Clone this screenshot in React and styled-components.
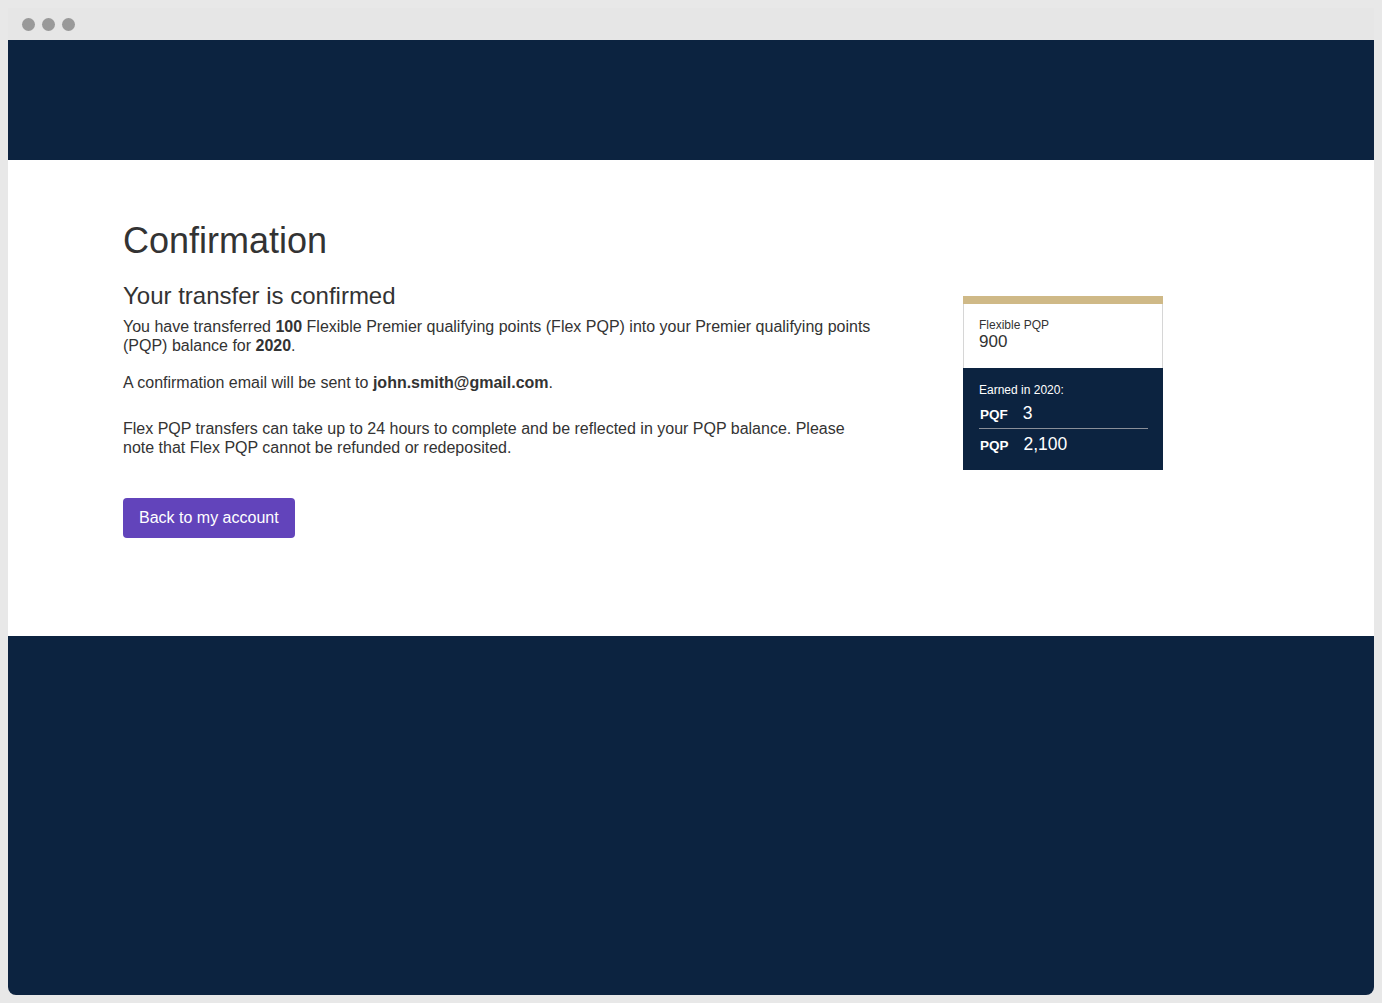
import styled, { createGlobalStyle } from "styled-components";

const GlobalStyle = createGlobalStyle`
  html, body {
    margin: 0;
    padding: 0;
    background: #e8e8e8;
  }
  body {
    font-family: "Liberation Sans", Arial, Helvetica, sans-serif;
    color: #333;
  }
`;

const Window = styled.div`
  margin: 8px;
  height: 987px;
  border-radius: 0 0 8px 8px;
  overflow: hidden;
  display: flex;
  flex-direction: column;
  background: #e6e6e6;
`;

const Chrome = styled.div`
  height: 32px;
  display: flex;
  align-items: center;
  gap: 7px;
  padding-left: 14px;
  box-sizing: border-box;
`;

const Dot = styled.span`
  width: 13px;
  height: 13px;
  border-radius: 50%;
  background: #999;
`;

const Header = styled.header`
  height: 120px;
  background: #0c2340;
`;

const Main = styled.main`
  height: 476px;
  background: #fff;
  padding: 59px 0 0 115px;
  box-sizing: border-box;
`;

const Title = styled.h1`
  margin: 0 0 19px;
  font-size: 36px;
  line-height: 43px;
  font-weight: 400;
  color: #333;
`;

const Row = styled.div`
  display: flex;
  align-items: flex-start;
`;

const Column = styled.div`
  width: 752px;
`;

const Subtitle = styled.h2`
  margin: 0 0 7px;
  font-size: 24px;
  line-height: 29px;
  font-weight: 400;
  color: #333;
`;

const Text = styled.p`
  margin: 0 0 ${(p) => p.gap || 0}px;
  font-size: 16px;
  line-height: 19px;
  color: #333;

  b {
    font-weight: 700;
  }
`;

const Button = styled.button`
  margin-top: 41px;
  height: 40px;
  padding: 0 16px;
  border: none;
  border-radius: 4px;
  background: #6244bb;
  color: #fff;
  font-family: inherit;
  font-size: 16px;
  cursor: pointer;
`;

const Card = styled.aside`
  width: 200px;
  margin: 15px 0 0 88px;
  border-top: 8px solid #cfb987;
`;

const CardTop = styled.div`
  height: 64px;
  box-sizing: border-box;
  padding: 14px 15px 0;
  border-left: 1px solid #d6d6d6;
  border-right: 1px solid #d6d6d6;
`;

const Label = styled.div`
  font-size: 12px;
  line-height: 14px;
  color: ${(p) => (p.light ? "#fff" : "#333")};
`;

const Amount = styled.div`
  font-size: 17px;
  line-height: 20px;
  color: #333;
`;

const CardBottom = styled.div`
  background: #0c2340;
  color: #fff;
  padding: 15px 15px 14px 16px;
`;

const Stat = styled.div`
  display: flex;
  align-items: baseline;
  gap: 15px;
  padding: ${(p) => (p.first ? "6px 0 3px 1px" : "5px 0 0 1px")};
  border-bottom: ${(p) => (p.first ? "1px solid #8a8f99" : "none")};
`;

const StatKey = styled.span`
  font-size: 13.5px;
  font-weight: 700;
  line-height: 20px;
`;

const StatValue = styled.span`
  font-size: 17.5px;
  line-height: 20px;
`;

const Footer = styled.footer`
  flex: 1;
  background: #0c2340;
`;

export default function App() {
  return (
    <>
      <GlobalStyle />
      <Window>
        <Chrome>
          <Dot />
          <Dot />
          <Dot />
        </Chrome>
        <Header />
        <Main>
          <Title>Confirmation</Title>
          <Row>
            <Column>
              <Subtitle>Your transfer is confirmed</Subtitle>
              <Text gap={18}>
                You have transferred <b>100</b> Flexible Premier qualifying
                points (Flex PQP) into your Premier qualifying points (PQP)
                balance for <b>2020</b>.
              </Text>
              <Text gap={27}>
                A confirmation email will be sent to{" "}
                <b>john.smith@gmail.com</b>.
              </Text>
              <Text>
                Flex PQP transfers can take up to 24 hours to complete and be
                reflected in your PQP balance. Please note that Flex PQP cannot
                be refunded or redeposited.
              </Text>
              <Button>Back to my account</Button>
            </Column>
            <Card>
              <CardTop>
                <Label>Flexible PQP</Label>
                <Amount>900</Amount>
              </CardTop>
              <CardBottom>
                <Label light>Earned in 2020:</Label>
                <Stat first>
                  <StatKey>PQF</StatKey>
                  <StatValue>3</StatValue>
                </Stat>
                <Stat>
                  <StatKey>PQP</StatKey>
                  <StatValue>2,100</StatValue>
                </Stat>
              </CardBottom>
            </Card>
          </Row>
        </Main>
        <Footer />
      </Window>
    </>
  );
}
